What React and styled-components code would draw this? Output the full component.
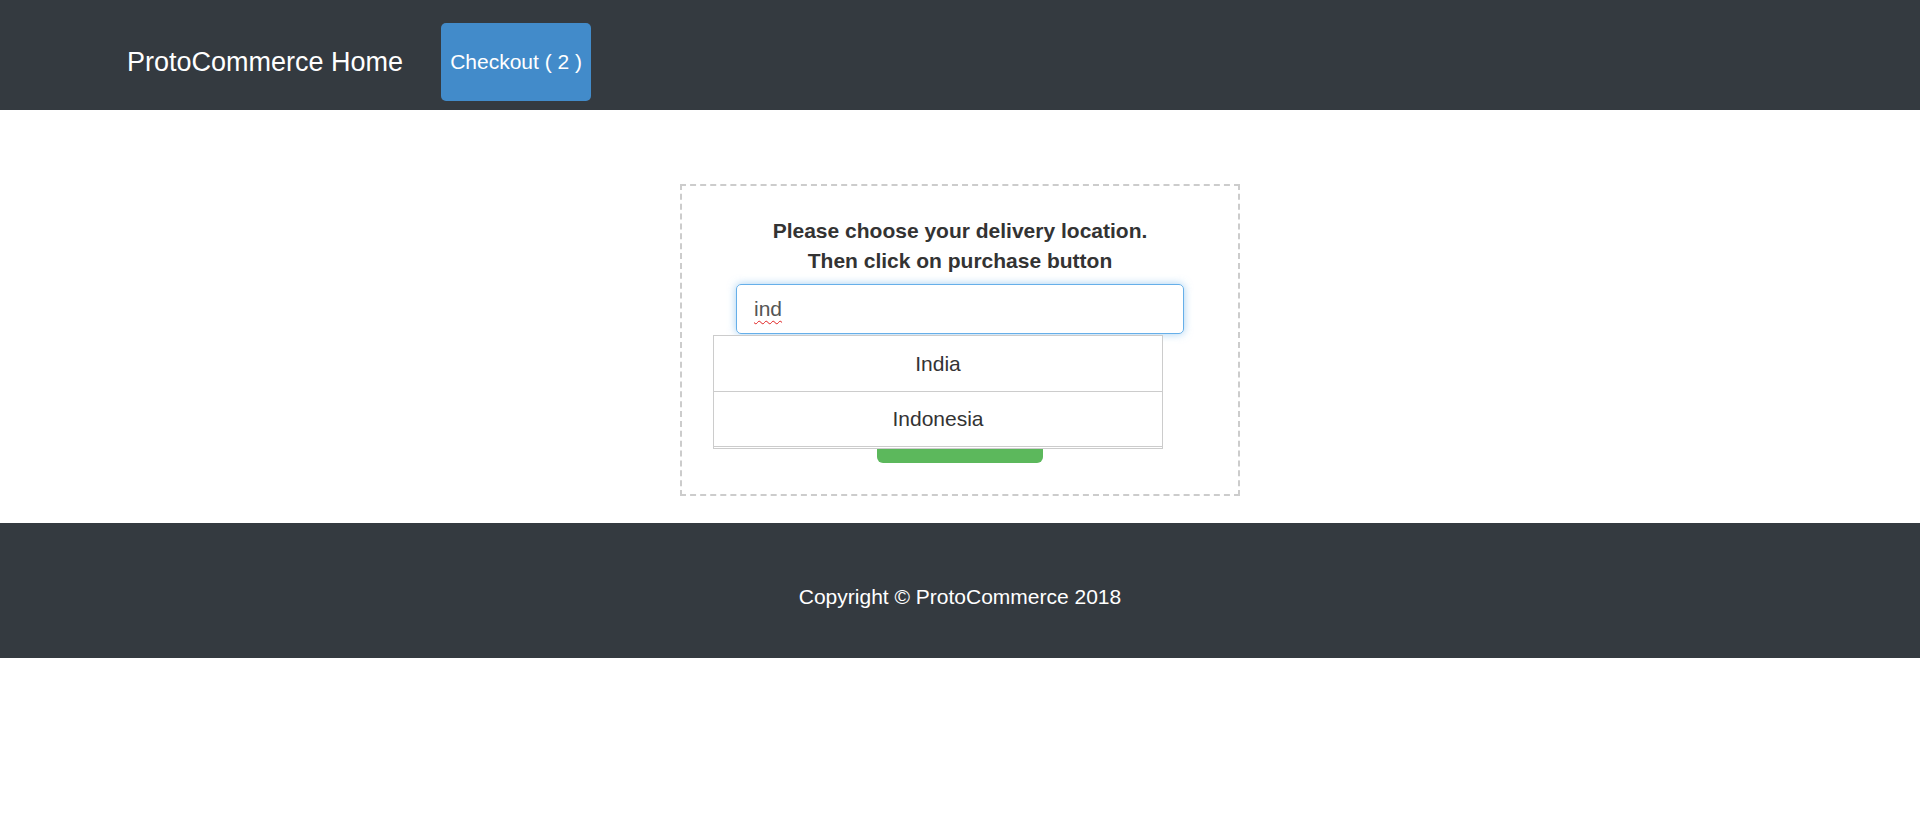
import React from 'react';
import styled, { createGlobalStyle } from 'styled-components';

const colors = {
  dark: '#343a40',
  text: '#333333',
  primary: '#428bca',
  success: '#5cb85c',
  border: '#cccccc',
  focus: '#66afe9',
};

const GlobalStyle = createGlobalStyle`
  body {
    margin: 0;
    background: #fff;
    font-family: "Liberation Sans", Arial, sans-serif;
  }
`;

const Navbar = styled.nav`
  display: flex;
  align-items: center;
  height: 110px;
  box-sizing: border-box;
  padding: 14px 0 0 127px;
  background: ${colors.dark};
`;

const Brand = styled.a`
  color: #fff;
  font-size: 27px;
  line-height: 34px;
  text-decoration: none;
`;

const CheckoutButton = styled.button`
  margin-left: 38px;
  width: 150px;
  height: 78px;
  padding: 0 9px;
  border: none;
  border-radius: 5px;
  background: ${colors.primary};
  color: #fff;
  font-family: inherit;
  font-size: 21px;
`;

const Main = styled.main`
  display: flex;
  justify-content: center;
  padding: 74px 0 27px;
`;

const LocationBox = styled.div`
  position: relative;
  width: 560px;
  box-sizing: border-box;
  padding: 30px 54px 31px;
  border: 2px dashed ${colors.border};
  text-align: center;
`;

const Heading = styled.h5`
  margin: 0;
  color: ${colors.text};
  font-size: 21px;
  font-weight: bold;
  line-height: 30px;
`;

const SearchField = styled.div`
  display: flex;
  align-items: center;
  margin-top: 8px;
  height: 50px;
  box-sizing: border-box;
  padding: 0 17px;
  border: 1px solid ${colors.focus};
  border-radius: 5px;
  box-shadow: 0 0 8px rgba(102, 175, 233, 0.6);
  color: #555;
  font-size: 21px;
  text-align: left;
`;

const Misspelled = styled.span`
  text-decoration: underline wavy #e02020;
  text-decoration-thickness: 1px;
  text-underline-offset: 4px;
  text-decoration-skip-ink: none;
`;

const PurchaseButton = styled.button`
  display: block;
  margin: 79px auto 0;
  width: 166px;
  height: 50px;
  border: none;
  border-radius: 6px;
  background: ${colors.success};
`;

const Suggestions = styled.ul`
  position: absolute;
  top: 149px;
  left: 31px;
  width: 450px;
  box-sizing: border-box;
  margin: 0;
  padding: 1px 0 1px;
  list-style: none;
  border: 1px solid ${colors.border};
  background: #fff;
`;

const Suggestion = styled.li`
  display: flex;
  align-items: center;
  justify-content: center;
  height: 55px;
  box-sizing: border-box;
  border-bottom: 1px solid ${colors.border};
  color: ${colors.text};
  font-size: 21px;
`;

const Footer = styled.footer`
  height: 135px;
  box-sizing: border-box;
  padding-top: 59px;
  background: ${colors.dark};
  color: #fff;
  font-size: 21px;
  line-height: 30px;
  text-align: center;
`;

const countries = ['India', 'Indonesia'];

const App = () => (
  <React.Fragment>
    <GlobalStyle />
    <Navbar>
      <Brand href="#">ProtoCommerce Home</Brand>
      <CheckoutButton>Checkout ( 2 )</CheckoutButton>
    </Navbar>
    <Main>
      <LocationBox>
        <Heading>
          Please choose your delivery location.
          <br />
          Then click on purchase button
        </Heading>
        <SearchField>
          <Misspelled>ind</Misspelled>
        </SearchField>
        <PurchaseButton aria-label="Purchase" />
        <Suggestions>
          {countries.map((country) => (
            <Suggestion key={country}>{country}</Suggestion>
          ))}
        </Suggestions>
      </LocationBox>
    </Main>
    <Footer>Copyright © ProtoCommerce 2018</Footer>
  </React.Fragment>
);

export default App;
